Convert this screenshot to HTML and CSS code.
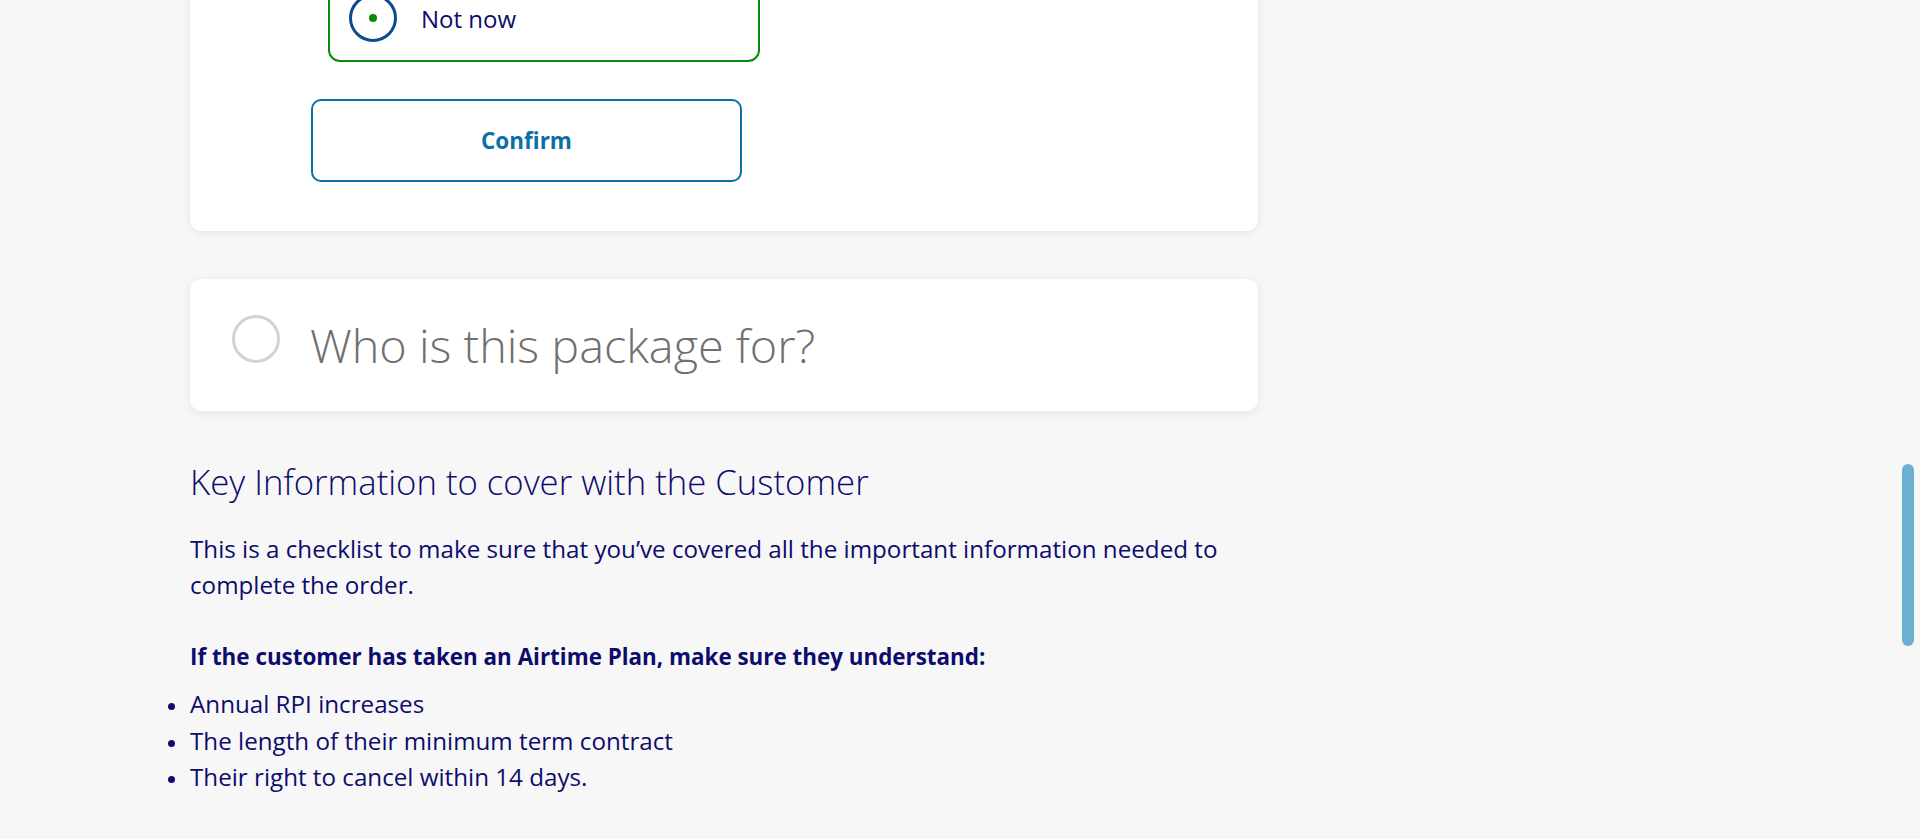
FILE: index.html
```html
<!DOCTYPE html>
<html lang="en">
<head>
<meta charset="utf-8">
<title>Order – Key information</title>
<link rel="stylesheet" href="styles.css">
</head>
<body>
<main class="page">
  <section class="card card-question">
    <div class="option option-selected">
      <span class="radio"><span class="radio-dot"></span></span>
      <span class="option-label">Not now</span>
    </div>
    <button class="btn-confirm" type="button">Confirm</button>
  </section>

  <section class="card card-collapsed">
    <span class="step-circle"></span>
    <h2 class="step-title">Who is this package for?</h2>
  </section>

  <section class="key-info">
    <h3 class="key-title">Key Information to cover with the Customer</h3>
    <p class="key-text">This is a checklist to make sure that you’ve covered all the important information needed to complete the order.</p>
    <p class="key-text key-strong">If the customer has taken an Airtime Plan, make sure they understand:</p>
    <ul class="key-list">
      <li>Annual RPI increases</li>
      <li>The length of their minimum term contract</li>
      <li>Their right to cancel within 14 days.</li>
    </ul>
  </section>
</main>
<div class="scroll-thumb"></div>
</body>
</html>
```

FILE: styles.css
```css
html, body {
  margin: 0;
  height: 100%;
  overflow: hidden;
  background: #f7f7f7;
}

body {
  font-family: "Open Sans", "Liberation Sans", sans-serif;
  color: #0d0c6c;
}

.page {
  width: 1068px;
  margin-left: 190px;
}

.card {
  background: #ffffff;
  border-radius: 12px;
  box-shadow: 0 2px 10px rgba(0, 0, 0, 0.08);
}

.card-question {
  margin-top: -60px;
  padding: 34px 0 49px 0;
  display: flex;
  flex-direction: column;
  align-items: flex-start;
}

.option {
  margin-left: 138px;
  width: 432px;
  height: 88px;
  box-sizing: border-box;
  border: 2px solid #0a8a0a;
  border-radius: 12px;
  display: flex;
  align-items: center;
  padding-left: 19px;
  gap: 24px;
}

.radio {
  width: 48px;
  height: 48px;
  box-sizing: border-box;
  border: 3px solid #0d4b8d;
  border-radius: 50%;
  display: flex;
  align-items: center;
  justify-content: center;
  flex: none;
}

.radio-dot {
  width: 8px;
  height: 8px;
  border-radius: 50%;
  background: #0a8a0a;
}

.option-label {
  font-size: 24px;
}

.btn-confirm {
  margin-top: 37px;
  margin-left: 121px;
  width: 431px;
  height: 83px;
  box-sizing: border-box;
  border: 2px solid #0a6fa6;
  border-radius: 10px;
  background: #ffffff;
  color: #0a70a8;
  font-family: "Open Sans", "Liberation Sans", sans-serif;
  font-weight: 700;
  font-size: 22.5px;
  padding: 0;
}

.card-collapsed {
  margin-top: 48px;
  height: 132px;
  box-sizing: border-box;
  display: flex;
  align-items: center;
  padding-left: 42px;
}

.step-circle {
  width: 48px;
  height: 48px;
  box-sizing: border-box;
  border: 3px solid #d3d3d3;
  border-radius: 50%;
  margin-right: 30px;
  margin-bottom: 13px;
  flex: none;
}

.step-title {
  margin: 0;
  font-weight: 300;
  font-size: 46.8px;
  line-height: 55px;
  color: #707070;
}

.key-title {
  margin: 50px 0 0;
  font-weight: 300;
  font-size: 34.7px;
  line-height: 42px;
}

.key-text {
  margin: 28px 0 0;
  font-size: 24.2px;
  line-height: 36px;
}

.key-strong {
  margin-top: 36px;
  font-size: 22.4px;
  font-weight: 700;
}

.key-list {
  margin: 11px 0 0;
  padding: 0;
  list-style: none;
  font-size: 24.2px;
  line-height: 36.5px;
}

.key-list li::before {
  content: "";
  display: inline-block;
  width: 7px;
  height: 7px;
  border-radius: 50%;
  background: currentColor;
  margin-left: -22px;
  margin-right: 15px;
  vertical-align: middle;
}

.scroll-thumb {
  position: fixed;
  left: 1902px;
  top: 464px;
  width: 12px;
  height: 182px;
  border-radius: 6px;
  background: #6ab0d1;
}
```
